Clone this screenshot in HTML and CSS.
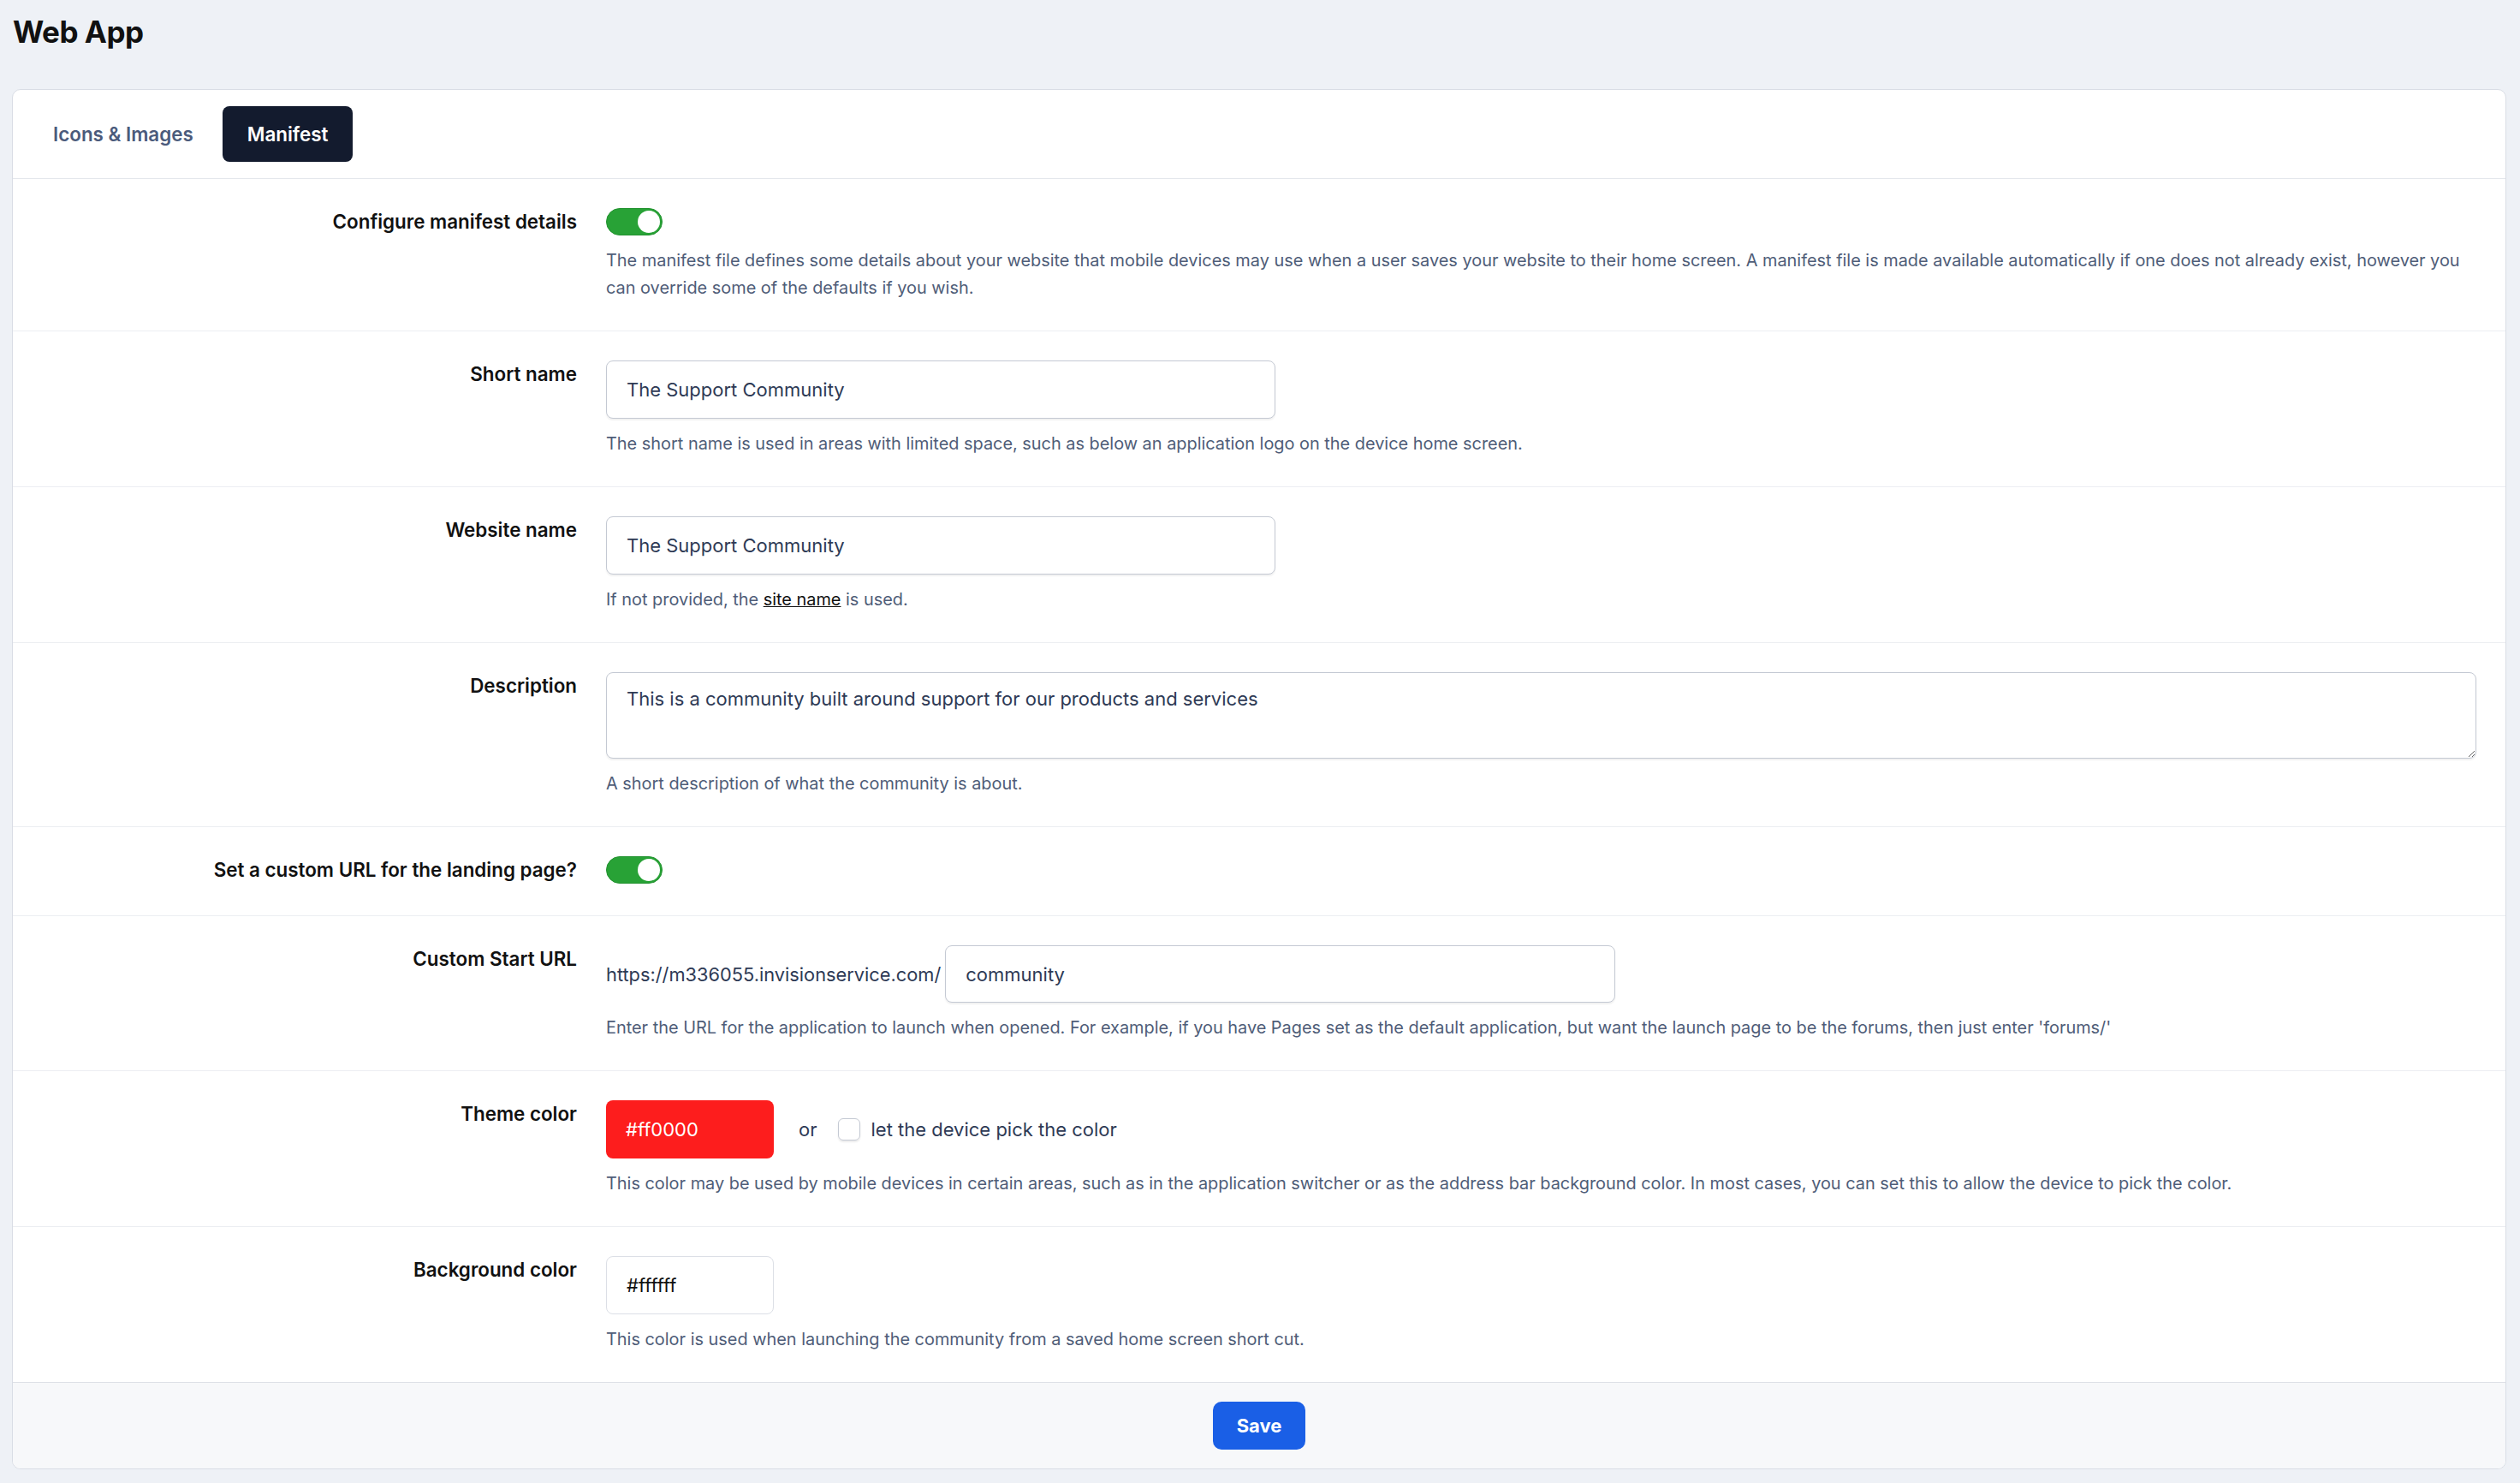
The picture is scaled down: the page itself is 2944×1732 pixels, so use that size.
FILE: index.html
```html
<!DOCTYPE html>
<html lang="en">

<head>
    <meta charset="UTF-8">
    <meta name="viewport" content="width=device-width, initial-scale=1.0">
    <title>Web App</title>
    <link rel="stylesheet" href="styles.css">
</head>

<body>
    <h1 class="page-title">Web App</h1>

    <div class="card">
        <div class="tabs">
            <button class="tab">Icons &amp; Images</button>
            <button class="tab active">Manifest</button>
        </div>

        <div class="form">
            <div class="row">
                <label class="row-label">Configure manifest details</label>
                <div class="row-field">
                    <span class="toggle on"></span>
                    <p class="help">The manifest file defines some details about your website that mobile devices may use when a user saves your website to their home screen. A manifest file is made available automatically if one does not already exist, however you can override some of the defaults if you wish.</p>
                </div>
            </div>

            <div class="row">
                <label class="row-label">Short name</label>
                <div class="row-field">
                    <input type="text" class="text-input" value="The Support Community">
                    <p class="help">The short name is used in areas with limited space, such as below an application logo on the device home screen.</p>
                </div>
            </div>

            <div class="row">
                <label class="row-label">Website name</label>
                <div class="row-field">
                    <input type="text" class="text-input" value="The Support Community">
                    <p class="help">If not provided, the <a href="#">site name</a> is used.</p>
                </div>
            </div>

            <div class="row">
                <label class="row-label">Description</label>
                <div class="row-field">
                    <textarea class="text-area">This is a community built around support for our products and services</textarea>
                    <p class="help">A short description of what the community is about.</p>
                </div>
            </div>

            <div class="row">
                <label class="row-label">Set a custom URL for the landing page?</label>
                <div class="row-field">
                    <span class="toggle on"></span>
                </div>
            </div>

            <div class="row">
                <label class="row-label">Custom Start URL</label>
                <div class="row-field">
                    <div class="url-group">
                        <span class="url-prefix">https://m336055.invisionservice.com/</span>
                        <input type="text" class="text-input" value="community">
                    </div>
                    <p class="help">Enter the URL for the application to launch when opened. For example, if you have Pages set as the default application, but want the launch page to be the forums, then just enter 'forums/'</p>
                </div>
            </div>

            <div class="row">
                <label class="row-label">Theme color</label>
                <div class="row-field">
                    <div class="color-group">
                        <span class="color-box red">#ff0000</span>
                        <span class="or">or</span>
                        <span class="checkbox"></span>
                        <span class="check-label">let the device pick the color</span>
                    </div>
                    <p class="help">This color may be used by mobile devices in certain areas, such as in the application switcher or as the address bar background color. In most cases, you can set this to allow the device to pick the color.</p>
                </div>
            </div>

            <div class="row">
                <label class="row-label">Background color</label>
                <div class="row-field">
                    <span class="color-box white">#ffffff</span>
                    <p class="help">This color is used when launching the community from a saved home screen short cut.</p>
                </div>
            </div>
        </div>

        <div class="footer">
            <button class="btn-save">Save</button>
        </div>
    </div>
</body>

</html>
```

FILE: styles.css
```css
* {
    margin: 0;
    padding: 0;
    box-sizing: border-box;
}

body {
    font-family: Inter, "Noto Sans", sans-serif;
    background-color: #eef1f6;
    padding: 16px 16px 0 14px;
    color: #111;
}

.page-title {
    font-size: 35px;
    font-weight: 700;
    line-height: 42px;
    letter-spacing: -0.5px;
    margin-bottom: 46px;
    padding-left: 1px;
}

.card {
    background: white;
    border: 1px solid #d9dde5;
    border-radius: 10px;
    overflow: hidden;
}

.tabs {
    display: flex;
    gap: 5px;
    padding: 19px 18px;
    border-bottom: 1px solid #e4e7ec;
}

.tab {
    height: 65px;
    padding: 0 29px;
    font-family: inherit;
    font-size: 22.4px;
    font-weight: 600;
    color: #4b5b7c;
    background: none;
    border: none;
    border-radius: 8px;
}

.tab.active {
    background-color: #131b2e;
    color: white;
}

.row {
    display: grid;
    grid-template-columns: 659px 1fr;
    column-gap: 34px;
    padding: 34px 34px 34px 0;
    border-bottom: 1px solid #eceef2;
}

.row:last-child {
    border-bottom: none;
}

.row-label {
    text-align: right;
    font-size: 22.4px;
    font-weight: 600;
    line-height: 31px;
    min-height: 35px;
    color: #111;
}

.row-field {
    min-width: 0;
}

.help {
    margin-top: 13px;
    font-size: 19.9px;
    line-height: 32px;
    color: #4f5d78;
}

.help a {
    color: #111;
}

.toggle {
    display: block;
    width: 66px;
    height: 32px;
    border-radius: 16px;
    background-color: #28a236;
    border: 1px solid #22922f;
    position: relative;
}

.toggle::after {
    content: "";
    position: absolute;
    top: 2px;
    right: 2px;
    width: 26px;
    height: 26px;
    border-radius: 50%;
    background: white;
}

.text-input,
.text-area {
    display: block;
    width: 782px;
    height: 68px;
    padding: 0 23px;
    font-family: inherit;
    font-size: 22px;
    color: #2e3a55;
    border: 1px solid #c4c9d3;
    border-radius: 8px;
    box-shadow: 0 2px 2px rgba(0, 0, 0, 0.06);
    outline: none;
}

.text-area {
    width: 100%;
    height: 101px;
    padding: 14px 23px;
    line-height: 32px;
    resize: vertical;
}

.url-group {
    display: flex;
    align-items: center;
    gap: 5px;
}

.url-prefix {
    font-size: 21.8px;
    color: #2e3a55;
}

.url-group .text-input {
    width: 783px;
    height: 67px;
}

.color-group {
    display: flex;
    align-items: center;
}

.color-box {
    display: flex;
    align-items: center;
    width: 196px;
    height: 68px;
    padding: 0 23px;
    font-size: 22px;
    border-radius: 8px;
}

.color-box.red {
    background-color: #fd1d1d;
    color: white;
}

.color-box.white {
    background: white;
    color: #111;
    border: 1px solid #dcdfe6;
}

.or {
    margin: 0 25px 0 29px;
    font-size: 22px;
    color: #2e3a55;
}

.checkbox {
    width: 26px;
    height: 26px;
    border: 1px solid #c4c9d3;
    border-radius: 6px;
    box-shadow: 0 2px 2px rgba(0, 0, 0, 0.08);
    margin-right: 12px;
}

.check-label {
    font-size: 22px;
    color: #2e3a55;
}

.footer {
    background-color: #f7f8fa;
    border-top: 1px solid #dde0e6;
    padding: 22px;
    text-align: center;
}

.btn-save {
    width: 108px;
    height: 56px;
    font-family: inherit;
    font-size: 22px;
    font-weight: 700;
    color: white;
    background-color: #1a5fe6;
    border: none;
    border-radius: 10px;
}
```
